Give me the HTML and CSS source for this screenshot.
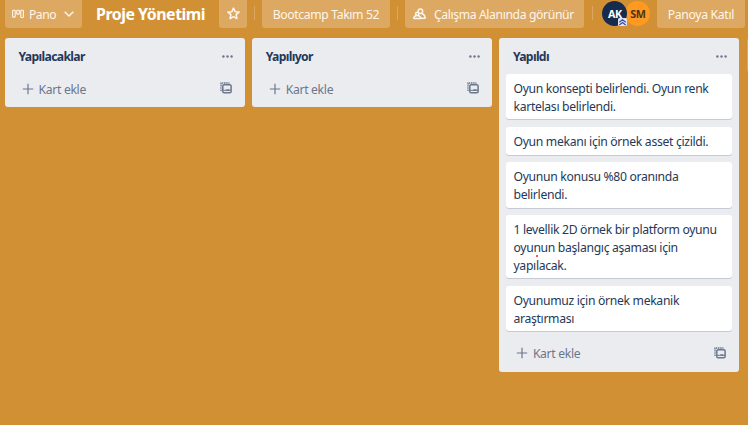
FILE: index.html
```html
<!DOCTYPE html>
<html lang="tr">
<head>
<meta charset="utf-8">
<title>Proje Yönetimi</title>
<link rel="stylesheet" href="styles.css">
</head>
<body>
<svg class="symbols" aria-hidden="true">
  <symbol id="plus" viewBox="0 0 12 12"><path d="M6 .8v10.4M.8 6h10.4" fill="none" stroke="currentColor" stroke-width="1.2"/></symbol>
  <symbol id="dots" viewBox="0 0 11 3"><g fill="currentColor"><circle cx="1.4" cy="1.5" r="1.2"/><circle cx="5.5" cy="1.5" r="1.2"/><circle cx="9.6" cy="1.5" r="1.2"/></g></symbol>
  <symbol id="template" viewBox="0 0 12 12"><g fill="none" stroke="currentColor"><path d="M1 9V1h8.5" stroke-width="1.3" stroke-dasharray="1.5 .7"/><rect x="2.8" y="2.7" width="8.3" height="8" rx="1.3" stroke-width="1.5"/><path d="M3 8.3h8" stroke-width="1"/></g><path d="M6.3 7.3h3.2v1.5H6.3z" fill="currentColor"/></symbol>
</svg>
<header class="bar">
  <div class="btn view">
    <svg class="i-board" viewBox="0 0 12 10"><g fill="none" stroke="currentColor" stroke-width="1.1"><rect x=".6" y="1.3" width="2.6" height="6.8" rx=".5"/><rect x="4.7" y="1.3" width="2.6" height="3.8" rx=".5"/><rect x="8.8" y="1.3" width="2.6" height="7.2" rx=".5"/></g></svg>
    <span class="t-pano">Pano</span>
    <svg class="i-chev" viewBox="0 0 10 6"><path d="M.7.8 5 5 9.3.8" fill="none" stroke="currentColor" stroke-width="1.4"/></svg>
  </div>
  <h1 class="title">Proje Yönetimi</h1>
  <div class="btn star"><svg class="i-star" viewBox="0 0 12 12"><path d="m6 1 1.5 3.3 3.6.4-2.7 2.4.8 3.6L6 8.9l-3.2 1.8.8-3.6L.9 4.7l3.6-.4z" fill="none" stroke="currentColor" stroke-width="1.4" stroke-linejoin="round"/></svg></div>
  <i class="sep"></i>
  <div class="btn team"><span>Bootcamp Takım 52</span></div>
  <i class="sep"></i>
  <div class="btn vis">
    <svg class="i-people" viewBox="0 0 12 11"><g fill="none" stroke="currentColor" stroke-width="1.4" stroke-linejoin="round"><circle cx="6.8" cy="2.9" r="2.1"/><circle cx="3.9" cy="5.3" r="1.5"/><path d="M.8 9.6c0-1.800 1.200-2.800 3-2.800s3.200 1 3.200 2.800zM7 9.400h4.200C11.200 7 10.200 5.700 8.100 5.300"/></g></svg>
    <span class="t-vis">Çalışma Alanında görünür</span>
  </div>
  <i class="sep"></i>
  <div class="members">
    <div class="avatar ak">AK<svg class="badge" viewBox="0 0 9 8"><rect width="9" height="8" rx="1.5" fill="#dfe4f7"/><path d="m1.300 4.200 3.200-2.500 3.200 2.500M1.300 7l3.200-2.500L7.700 7" fill="none" stroke="#3d4d9c" stroke-width="1.2"/></svg></div>
    <div class="avatar sm">SM</div>
  </div>
  <div class="btn join"><span>Panoya Katıl</span></div>
</header>
<main class="board">
  <section class="list">
    <div class="head"><h2>Yapılacaklar</h2><svg class="dots"><use href="#dots"/></svg></div>
    <div class="add"><svg class="plus"><use href="#plus"/></svg><span>Kart ekle</span><svg class="template"><use href="#template"/></svg></div>
  </section>
  <section class="list">
    <div class="head"><h2>Yapılıyor</h2><svg class="dots"><use href="#dots"/></svg></div>
    <div class="add"><svg class="plus"><use href="#plus"/></svg><span>Kart ekle</span><svg class="template"><use href="#template"/></svg></div>
  </section>
  <section class="list filled">
    <div class="head"><h2>Yapıldı</h2><svg class="dots"><use href="#dots"/></svg></div>
    <div class="cards">
      <p class="card">Oyun konsepti belirlendi. Oyun renk<br>kartelası belirlendi.</p>
      <p class="card">Oyun mekanı için örnek asset çizildi.</p>
      <p class="card">Oyunun konusu %80 oranında<br>belirlendi.</p>
      <p class="card marked">1 levellik 2D örnek bir platform oyunu<br>oyunun başlangıç aşaması için<br>yapılacak.</p>
      <p class="card">Oyunumuz için örnek mekanik<br>araştırması</p>
    </div>
    <div class="add"><svg class="plus"><use href="#plus"/></svg><span>Kart ekle</span><svg class="template"><use href="#template"/></svg></div>
  </section>
  <section class="next"></section>
</main>
</body>
</html>
```
FILE: styles.css
```css
* { box-sizing: border-box; }
body {
  margin: 0;
  width: 748px;
  height: 425px;
  overflow: hidden;
  background: #d29034;
  font-family: "Noto Sans", "Open Sans", sans-serif;
  font-size: 12.2px;
  letter-spacing: -0.32px;
  color: #253858;
}
h1, h2, p { margin: 0; }
svg { display: block; flex: none; }
.symbols { position: absolute; width: 0; height: 0; }

.bar {
  display: flex;
  height: 27.5px;
  padding-left: 5px;
  color: #fff;
  white-space: nowrap;
}
.btn {
  display: flex;
  flex: none;
  align-items: center;
  height: 27.5px;
  border-radius: 0 0 3px 3px;
  background: #dda861;
  color: #fdf6ec;
}
.btn span { padding-top: 2px; }
.view { width: 76.5px; padding-left: 7px; }
.i-board { width: 12px; height: 10px; }
.t-pano { width: 34.5px; margin-left: 5px; letter-spacing: -0.5px; }
.i-chev { width: 10px; height: 6px; }
.title {
  width: 123px;
  margin-left: 14.5px;
  font-size: 15.9px;
  line-height: 29px;
  letter-spacing: -0.47px;
}
.star { width: 28px; justify-content: center; }
.i-star { width: 13px; height: 13px; }
.sep {
  flex: none;
  width: 1px;
  height: 14px;
  margin: 6px 7px 0 7.2px;
  background: #dca762;
}
.team { width: 128px; padding-left: 10.5px; letter-spacing: -0.36px; }
.vis { width: 179px; padding-left: 8px; letter-spacing: -0.38px; }
.i-people { width: 13px; height: 12px; }
.t-vis { margin-left: 7.5px; }
.members { display: flex; flex: none; margin: 1px 6.8px 0 2.9px; }
.avatar {
  position: relative;
  width: 25px;
  height: 25px;
  border-radius: 50%;
  font-size: 10.8px;
  font-weight: 700;
  line-height: 25px;
  text-align: center;
}
.ak { z-index: 1; background: #172b4d; }
.sm { margin-left: -2px; background: #ff991f; color: #4a3420; }
.badge { position: absolute; right: 0; bottom: 0; width: 9px; height: 8px; }
.join { width: 88px; padding-left: 10.5px; }

.board {
  display: flex;
  align-items: flex-start;
  gap: 7.2px;
  padding: 10.5px 0 0 5px;
}
.list {
  flex: none;
  width: 240px;
  height: 69px;
  border-radius: 3px;
  background: #ebecf0;
}
.filled { height: 334px; }
.head {
  display: flex;
  align-items: center;
  justify-content: space-between;
  height: 35.6px;
  padding: 1px 12px 0 13.5px;
}
h2 {
  padding-top: 2px;
  font-size: 12.2px;
  line-height: 18px;
  letter-spacing: -0.66px;
}
.dots { width: 11px; height: 3px; color: #6b778c; }
.add {
  display: flex;
  align-items: center;
  height: 30px;
  padding: 0 13.5px 0 17px;
  color: #6b778c;
}
.add span { margin: 1px auto 0 4.5px; }
.plus { width: 12px; height: 12px; }
.template { width: 12px; height: 12px; margin-bottom: 1px; }
.cards {
  display: grid;
  gap: 7.2px;
  padding: 0 7px 7px;
}
.card {
  padding: 6.4px 0 4px 7.1px;
  border-radius: 3px;
  background: #fff;
  box-shadow: 0 1px 0 #c5cad4;
  line-height: 17.7px;
  white-space: nowrap;
}
.marked { position: relative; }
.marked::after {
  content: "";
  position: absolute;
  left: 30px;
  top: 40px;
  width: 2px;
  height: 2px;
  border-radius: 50%;
  background: #f0202a;
}
.next {
  flex: none;
  width: 20px;
  height: 34px;
  border-radius: 3px;
  background: #dda861;
}
```
